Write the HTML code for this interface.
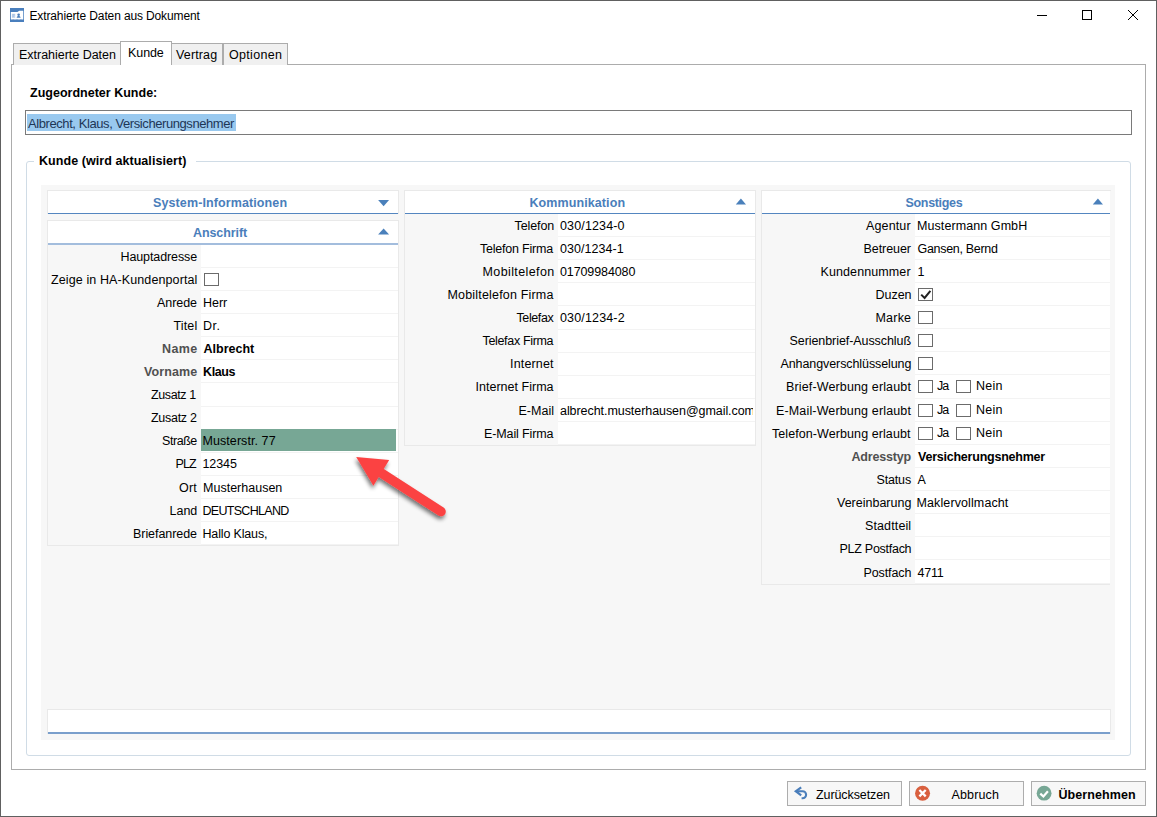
<!DOCTYPE html>
<html lang="de">
<head>
<meta charset="utf-8">
<title>Extrahierte Daten aus Dokument</title>
<style>
html,body{margin:0;padding:0;}
body{width:1157px;height:817px;overflow:hidden;background:#fff;position:relative;
  font-family:"Liberation Sans",sans-serif;font-size:12.5px;color:#000;}
#win{position:absolute;left:0;top:0;width:1155px;height:815px;border:1px solid #606060;background:#fff;}
.t{position:absolute;white-space:nowrap;line-height:14px;height:14px;}
.b{font-weight:bold;}
.tab{position:absolute;box-sizing:border-box;border:1px solid #acacac;border-bottom:none;background:#f0f0f0;top:43px;height:22px;}
.tab.sel{background:#fff;top:41px;height:24px;z-index:3;}
#panel{position:absolute;left:11px;top:64px;width:1133px;height:704px;border:1px solid #acacac;background:#fff;}
#inp{position:absolute;left:25px;top:110px;width:1105px;height:23px;border:1px solid #7a7a7a;background:#fff;}
#sel{position:absolute;left:27px;top:114px;width:209px;height:17px;background:#99c9ef;}
#grp{position:absolute;left:26px;top:161px;width:1103px;height:593px;border:1px solid #d0dce6;border-radius:3px;}
#grpbg{position:absolute;left:34px;top:155px;width:162px;height:14px;background:#fff;}
#gray{position:absolute;left:41px;top:185px;width:1074px;height:555px;background:#f7f7f7;}
.box{position:absolute;box-sizing:border-box;border:1px solid #e9e9e9;background:#f7f7f7;}
.hd{position:absolute;left:0;top:0;right:0;background:#fff;}
.hl{position:absolute;left:0;right:0;height:1px;background:#5486c0;}
.tri{position:absolute;width:0;height:0;border-left:5.5px solid transparent;border-right:5.5px solid transparent;}
.tri.dn{border-top:6px solid #4a7ebb;}
.tri.up{border-bottom:6px solid #4a7ebb;}
.val{position:absolute;background:#fff;border-bottom:1px solid #f3f3f3;box-sizing:border-box;}
.cb{position:absolute;box-sizing:border-box;width:15px;height:13px;border:1px solid #6b6b6b;background:#fff;}
.btn{position:absolute;top:781px;width:113px;height:23px;border:1px solid #adadad;background:#f7f7f7;}
.clip{position:absolute;overflow:hidden;}
</style>
</head>
<body>
<div id="win"></div>

<svg style="position:absolute;left:9.8px;top:7.6px" width="14.4" height="14.4" viewBox="0 0 14 14"><rect width="14" height="14" fill="#4a7fbd"/><path d="M0.8 3.8H7.2L9.1 2.6H12.9V11.2H0.8z" fill="#fff"/><path d="M2.6 11.2h0.9v-0.6h-0.9zM6.4 11.2h0.9v-0.6h-0.9zM10.2 11.2h0.9v-0.6h-0.9z" fill="#4a7fbd"/><rect x="1.8" y="5.6" width="3.3" height="4" fill="#c3d5ec"/><path d="M2.4 6.6h2.1M2.4 8h1.5" stroke="#9bb9df" stroke-width="0.7"/><circle cx="8.4" cy="6.6" r="1.25" fill="#4a7fbd"/><path d="M6.5 9.6C6.5 8.3 7.4 7.8 8.4 7.8S10.3 8.3 10.3 9.6z" fill="#4a7fbd"/></svg>
<svg style="position:absolute;left:1030px;top:5px" width="120" height="22" viewBox="0 0 120 22"><path d="M7 10.5h10" stroke="#000" stroke-width="1" fill="none"/><rect x="52.5" y="5.5" width="9" height="9" stroke="#000" stroke-width="1" fill="none"/><path d="M98 5l10 10M108 5l-10 10" stroke="#000" stroke-width="1" fill="none"/></svg>
<div id="panel"></div>
<div class="tab" style="left:13px;width:108px"></div>
<div class="tab" style="left:171px;width:52px"></div>
<div class="tab" style="left:223px;width:65px"></div>
<div class="tab sel" style="left:120px;width:52px"></div>
<div id="inp"></div><div id="sel"></div>
<div id="grp"></div><div id="grpbg"></div>
<div id="gray"></div>
<div class="box" style="left:47px;top:190px;width:352px;height:24px"><div class="hd" style="height:22px"></div><div class="hl" style="bottom:-1px;height:1px;background:#5486c0"></div></div>
<svg style="position:absolute;left:0;top:0" width="1157" height="300" viewBox="0 0 1157 300"><polygon points="378.1,200 389.1,200 383.6,206.2" fill="#4a80bb"/></svg>
<div class="box" style="left:47px;top:220px;width:352px;height:25px"><div class="hd" style="height:22px"></div><div class="hl" style="bottom:-1px;height:2px;background:#a3bddd"></div></div>
<svg style="position:absolute;left:0;top:0" width="1157" height="300" viewBox="0 0 1157 300"><polygon points="378.1,234.6 389.1,234.6 383.6,228.6" fill="#4a80bb"/></svg>
<div class="box" style="left:47px;top:245px;width:352px;height:301px;border-top:none"></div>
<div class="val" style="left:201px;top:245px;width:197px;height:23px"></div>
<div class="val" style="left:201px;top:268px;width:197px;height:23px"></div>
<div class="cb" style="left:204px;top:273px"></div>
<div class="val" style="left:201px;top:291px;width:197px;height:23px"></div>
<div class="val" style="left:201px;top:314px;width:197px;height:23px"></div>
<div class="val" style="left:201px;top:337px;width:197px;height:23px"></div>
<div class="val" style="left:201px;top:360px;width:197px;height:23px"></div>
<div class="val" style="left:201px;top:383px;width:197px;height:24px"></div>
<div class="val" style="left:201px;top:407px;width:197px;height:23px"></div>
<div class="val" style="left:201px;top:430px;width:197px;height:23px"></div>
<div style="position:absolute;left:201px;top:429px;width:195px;height:22px;background:#77a795"></div>
<div class="val" style="left:201px;top:453px;width:197px;height:23px"></div>
<div class="val" style="left:201px;top:476px;width:197px;height:23px"></div>
<div class="val" style="left:201px;top:499px;width:197px;height:23px"></div>
<div class="val" style="left:201px;top:522px;width:197px;height:23px"></div>
<div class="box" style="left:404px;top:190px;width:352px;height:24px"><div class="hd" style="height:22px"></div><div class="hl" style="bottom:-1px;height:1px;background:#5486c0"></div></div>
<svg style="position:absolute;left:0;top:0" width="1157" height="300" viewBox="0 0 1157 300"><polygon points="735.8,204.6 746.0,204.6 740.9,198.6" fill="#4a80bb"/></svg>
<div class="box" style="left:404px;top:214px;width:352px;height:232px;border-top:none"></div>
<div class="val" style="left:558px;top:214px;width:197px;height:23px"></div>
<div class="val" style="left:558px;top:237px;width:197px;height:23px"></div>
<div class="val" style="left:558px;top:260px;width:197px;height:23px"></div>
<div class="val" style="left:558px;top:283px;width:197px;height:23px"></div>
<div class="val" style="left:558px;top:306px;width:197px;height:24px"></div>
<div class="val" style="left:558px;top:330px;width:197px;height:23px"></div>
<div class="val" style="left:558px;top:353px;width:197px;height:23px"></div>
<div class="val" style="left:558px;top:376px;width:197px;height:23px"></div>
<div class="val" style="left:558px;top:399px;width:197px;height:23px"></div>
<div class="val" style="left:558px;top:422px;width:197px;height:23px"></div>
<div class="box" style="left:761px;top:190px;width:350px;height:24px"><div class="hd" style="height:22px"></div><div class="hl" style="bottom:-1px;height:1px;background:#5486c0"></div></div>
<svg style="position:absolute;left:0;top:0" width="1157" height="300" viewBox="0 0 1157 300"><polygon points="1092.8,204.6 1103.0,204.6 1097.8999999999999,198.6" fill="#4a80bb"/></svg>
<div class="box" style="left:761px;top:214px;width:350px;height:371px;border-top:none"></div>
<div class="val" style="left:915px;top:214px;width:195px;height:23px"></div>
<div class="val" style="left:915px;top:237px;width:195px;height:23px"></div>
<div class="val" style="left:915px;top:260px;width:195px;height:23px"></div>
<div class="val" style="left:915px;top:283px;width:195px;height:23px"></div>
<div class="cb" style="left:918px;top:288px"></div>
<svg style="position:absolute;left:918px;top:288px" width="15" height="13" viewBox="0 0 15 13"><path d="M3.2 6.6L6.6 10L12.4 2.8" stroke="#222" stroke-width="2" fill="none"/></svg>
<div class="val" style="left:915px;top:306px;width:195px;height:23px"></div>
<div class="cb" style="left:918px;top:311px"></div>
<div class="val" style="left:915px;top:329px;width:195px;height:23px"></div>
<div class="cb" style="left:918px;top:334px"></div>
<div class="val" style="left:915px;top:352px;width:195px;height:23px"></div>
<div class="cb" style="left:918px;top:357px"></div>
<div class="val" style="left:915px;top:375px;width:195px;height:24px"></div>
<div class="cb" style="left:918px;top:380px"></div>
<div class="cb" style="left:956px;top:380px"></div>
<div class="val" style="left:915px;top:399px;width:195px;height:23px"></div>
<div class="cb" style="left:918px;top:404px"></div>
<div class="cb" style="left:956px;top:404px"></div>
<div class="val" style="left:915px;top:422px;width:195px;height:23px"></div>
<div class="cb" style="left:918px;top:427px"></div>
<div class="cb" style="left:956px;top:427px"></div>
<div class="val" style="left:915px;top:445px;width:195px;height:23px"></div>
<div class="val" style="left:915px;top:468px;width:195px;height:23px"></div>
<div class="val" style="left:915px;top:491px;width:195px;height:23px"></div>
<div class="val" style="left:915px;top:514px;width:195px;height:23px"></div>
<div class="val" style="left:915px;top:537px;width:195px;height:23px"></div>
<div class="val" style="left:915px;top:560px;width:195px;height:24px"></div>
<div style="position:absolute;left:1110px;top:191px;width:1px;height:395px;background:#f7f7f7"></div>
<div class="box" style="left:47px;top:709px;width:1064px;height:25px"><div class="hd" style="height:22px"></div><div class="hl" style="bottom:-1px;height:2px;background:#7a9fcc"></div></div>
<div class="btn" style="left:787px"></div>
<div class="btn" style="left:909px"></div>
<div class="btn" style="left:1031px"></div>
<svg style="position:absolute;left:790px;top:783px" width="22" height="20" viewBox="790 783 22 20"><path d="M801.2 787.3L795.8 791.2L801.2 795.3" stroke="#4a7ebb" stroke-width="2.2" fill="none"/><path d="M796.5 791.2H802.6A3.5 3.5 0 0 1 802.6 798.2H801.6" stroke="#4a7ebb" stroke-width="2.1" fill="none"/></svg>
<svg style="position:absolute;left:912px;top:783px" width="22" height="20" viewBox="912 783 22 20"><circle cx="922.55" cy="793.2" r="7.5" fill="#d9603f"/><path d="M919.4 790.05l6.3 6.3M925.7 790.05l-6.3 6.3" stroke="#fff" stroke-width="2.3" fill="none"/></svg>
<svg style="position:absolute;left:1034px;top:783px" width="22" height="20" viewBox="1034 783 22 20"><circle cx="1044.1" cy="793.2" r="7.4" fill="#77a795"/><path d="M1040.3 793.6l3.1 2.9l4.5-5.2" stroke="#fff" stroke-width="2.2" fill="none"/></svg>
<div class="t" id="title" style="left:29.5px;top:9px;font-size:12px;letter-spacing:-0.13px;">Extrahierte Daten aus Dokument</div>
<div class="t" id="tab1" style="left:19px;top:48px;letter-spacing:-0.02px;">Extrahierte Daten</div>
<div class="t" id="tab2" style="left:128px;top:46px;letter-spacing:-0.08px;z-index:4;">Kunde</div>
<div class="t" id="tab3" style="left:176px;top:48px;letter-spacing:0.14px;">Vertrag</div>
<div class="t" id="tab4" style="left:229px;top:48px;letter-spacing:0.32px;">Optionen</div>
<div class="t b" id="zk" style="left:30px;top:86px;letter-spacing:0.01px;">Zugeordneter Kunde:</div>
<div class="t" id="seltxt" style="left:28px;top:117px;font-size:13px;letter-spacing:-0.42px;color:#1e3656;">Albrecht, Klaus, Versicherungsnehmer</div>
<div class="t b" id="grpt" style="left:39px;top:154px;letter-spacing:0.06px;">Kunde (wird aktualisiert)</div>
<div class="t b" id="h1" style="left:153px;top:196px;letter-spacing:0.11px;color:#4a7ebb;">System-Informationen</div>
<div class="t b" id="h2" style="left:193px;top:226px;letter-spacing:-0.09px;color:#4a7ebb;">Anschrift</div>
<div class="t" id="Ll0" style="left:120.5px;top:250px;letter-spacing:-0.11px;">Hauptadresse</div>
<div class="t" id="Ll1" style="left:51px;top:273px;letter-spacing:0.11px;">Zeige in HA-Kundenportal</div>
<div class="t" id="Ll2" style="left:157px;top:296px;letter-spacing:-0.06px;">Anrede</div>
<div class="t" id="Lv2" style="left:203px;top:296px;letter-spacing:-0.03px;">Herr</div>
<div class="t" id="Ll3" style="left:173.5px;top:319px;letter-spacing:0.15px;">Titel</div>
<div class="t" id="Lv3" style="left:203px;top:319px;letter-spacing:0.56px;">Dr.</div>
<div class="t b" id="Ll4" style="left:162px;top:342px;letter-spacing:0.36px;color:#505050;">Name</div>
<div class="t b" id="Lv4" style="left:203.5px;top:342px;letter-spacing:0.01px;">Albrecht</div>
<div class="t b" id="Ll5" style="left:144px;top:365px;letter-spacing:0.09px;color:#505050;">Vorname</div>
<div class="t b" id="Lv5" style="left:203px;top:365px;letter-spacing:-0.38px;">Klaus</div>
<div class="t" id="Ll6" style="left:151px;top:388px;letter-spacing:-0.38px;">Zusatz 1</div>
<div class="t" id="Ll7" style="left:151px;top:411px;letter-spacing:-0.28px;">Zusatz 2</div>
<div class="t" id="Ll8" style="left:162px;top:434px;letter-spacing:-0.44px;">Straße</div>
<div class="t" id="Lv8" style="left:202.5px;top:434px;letter-spacing:0.07px;">Musterstr. 77</div>
<div class="t" id="Ll9" style="left:175.5px;top:457px;letter-spacing:-0.86px;">PLZ</div>
<div class="t" id="Lv9" style="left:202.5px;top:457px;letter-spacing:-0.08px;">12345</div>
<div class="t" id="Ll10" style="left:179px;top:481px;letter-spacing:0.23px;">Ort</div>
<div class="t" id="Lv10" style="left:203px;top:481px;letter-spacing:0.01px;">Musterhausen</div>
<div class="t" id="Ll11" style="left:169.5px;top:504px;">Land</div>
<div class="t" id="Lv11" style="left:202.5px;top:504px;letter-spacing:-0.7px;">DEUTSCHLAND</div>
<div class="t" id="Ll12" style="left:133px;top:527px;letter-spacing:-0.06px;">Briefanrede</div>
<div class="t" id="Lv12" style="left:202.5px;top:527px;letter-spacing:-0.16px;">Hallo Klaus,</div>
<div class="t b" id="h3" style="left:529.5px;top:196px;letter-spacing:0.09px;color:#4a7ebb;">Kommunikation</div>
<div class="t" id="Ml0" style="left:514.5px;top:219px;letter-spacing:-0.09px;">Telefon</div>
<div class="t" id="Mv0" style="left:560px;top:219px;letter-spacing:0.14px;">030/1234-0</div>
<div class="t" id="Ml1" style="left:480px;top:242px;letter-spacing:-0.21px;">Telefon Firma</div>
<div class="t" id="Mv1" style="left:560px;top:242px;letter-spacing:0.04px;">030/1234-1</div>
<div class="t" id="Ml2" style="left:482.5px;top:265px;letter-spacing:0.4px;">Mobiltelefon</div>
<div class="t" id="Mv2" style="left:560px;top:265px;letter-spacing:-0.11px;">01709984080</div>
<div class="t" id="Ml3" style="left:447.5px;top:288px;letter-spacing:0.18px;">Mobiltelefon Firma</div>
<div class="t" id="Ml4" style="left:516.5px;top:311px;letter-spacing:-0.4px;">Telefax</div>
<div class="t" id="Mv4" style="left:560px;top:311px;letter-spacing:0.15px;">030/1234-2</div>
<div class="t" id="Ml5" style="left:482.5px;top:334px;letter-spacing:-0.33px;">Telefax Firma</div>
<div class="t" id="Ml6" style="left:510px;top:357px;letter-spacing:0.16px;">Internet</div>
<div class="t" id="Ml7" style="left:475.5px;top:380px;letter-spacing:0.02px;">Internet Firma</div>
<div class="t" id="Ml8" style="left:518.5px;top:404px;letter-spacing:0.02px;">E-Mail</div>
<div class="clip" style="left:560px;top:404px;width:193px;height:16px"><div class="t" id="Mv8" style="left:0;top:0;letter-spacing:-0.06px;">albrecht.musterhausen@gmail.com</div></div>
<div class="t" id="Ml9" style="left:484px;top:427px;letter-spacing:-0.12px;">E-Mail Firma</div>
<div class="t b" id="h4" style="left:905.5px;top:196px;letter-spacing:-0.32px;color:#4a7ebb;">Sonstiges</div>
<div class="t" id="Rl0" style="left:866px;top:219px;letter-spacing:0.13px;">Agentur</div>
<div class="t" id="Rv0" style="left:917px;top:219px;letter-spacing:0.08px;">Mustermann GmbH</div>
<div class="t" id="Rl1" style="left:863.5px;top:242px;letter-spacing:-0.07px;">Betreuer</div>
<div class="t" id="Rv1" style="left:917.5px;top:242px;letter-spacing:-0.31px;">Gansen, Bernd</div>
<div class="t" id="Rl2" style="left:820.5px;top:265px;letter-spacing:0.1px;">Kundennummer</div>
<div class="t" id="Rv2" style="left:917.5px;top:265px;">1</div>
<div class="t" id="Rl3" style="left:875.5px;top:288px;letter-spacing:-0.02px;">Duzen</div>
<div class="t" id="Rl4" style="left:875.5px;top:311px;letter-spacing:0.2px;">Marke</div>
<div class="t" id="Rl5" style="left:789.5px;top:334px;letter-spacing:-0.07px;">Serienbrief-Ausschluß</div>
<div class="t" id="Rl6" style="left:780.5px;top:357px;letter-spacing:-0.09px;">Anhangverschlüsselung</div>
<div class="t" id="Rl7" style="left:786px;top:380px;letter-spacing:0.14px;">Brief-Werbung erlaubt</div>
<div class="t" id="Rja7" style="left:937px;top:379px;letter-spacing:-0.9px;">Ja</div>
<div class="t" id="Rnein7" style="left:976px;top:379px;letter-spacing:0.27px;">Nein</div>
<div class="t" id="Rl8" style="left:776px;top:404px;letter-spacing:0.15px;">E-Mail-Werbung erlaubt</div>
<div class="t" id="Rja8" style="left:937px;top:403px;letter-spacing:-0.9px;">Ja</div>
<div class="t" id="Rnein8" style="left:976px;top:403px;letter-spacing:0.27px;">Nein</div>
<div class="t" id="Rl9" style="left:772px;top:427px;letter-spacing:0.08px;">Telefon-Werbung erlaubt</div>
<div class="t" id="Rja9" style="left:937px;top:426px;letter-spacing:-0.9px;">Ja</div>
<div class="t" id="Rnein9" style="left:976px;top:426px;letter-spacing:0.27px;">Nein</div>
<div class="t b" id="Rl10" style="left:851.5px;top:450px;letter-spacing:-0.19px;color:#505050;">Adresstyp</div>
<div class="t b" id="Rv10" style="left:918px;top:450px;letter-spacing:-0.23px;">Versicherungsnehmer</div>
<div class="t" id="Rl11" style="left:876.5px;top:473px;letter-spacing:-0.16px;">Status</div>
<div class="t" id="Rv11" style="left:917.5px;top:473px;">A</div>
<div class="t" id="Rl12" style="left:837px;top:496px;">Vereinbarung</div>
<div class="t" id="Rv12" style="left:916.5px;top:496px;letter-spacing:0.11px;">Maklervollmacht</div>
<div class="t" id="Rl13" style="left:865px;top:519px;letter-spacing:0.12px;">Stadtteil</div>
<div class="t" id="Rl14" style="left:839.5px;top:542px;letter-spacing:-0.27px;">PLZ Postfach</div>
<div class="t" id="Rl15" style="left:863.5px;top:566px;letter-spacing:-0.11px;">Postfach</div>
<div class="t" id="Rv15" style="left:917.5px;top:566px;letter-spacing:-0.22px;">4711</div>
<div class="t" id="b1" style="left:816px;top:788px;letter-spacing:-0.09px;">Zurücksetzen</div>
<div class="t" id="b2" style="left:951.5px;top:788px;letter-spacing:0.13px;">Abbruch</div>
<div class="t b" id="b3" style="left:1058.5px;top:788px;letter-spacing:0.07px;">Übernehmen</div>
<svg style="position:absolute;left:330px;top:430px;overflow:visible" width="140" height="110" viewBox="330 430 140 110">
<defs><filter id="sh" x="-30%" y="-30%" width="160%" height="160%"><feGaussianBlur in="SourceAlpha" stdDeviation="2.2"/><feOffset dx="-1.5" dy="3"/><feComponentTransfer><feFuncA type="linear" slope="0.55"/></feComponentTransfer><feMerge><feMergeNode/><feMergeNode in="SourceGraphic"/></feMerge></filter></defs>
<g filter="url(#sh)" fill="#fb4343" stroke="none">
<path d="M356.2 457 L389.2 460.1 L373.4 485.7 Z"/>
<path d="M381.3 473 L441 511.6" stroke="#fb4343" stroke-width="9.5" stroke-linecap="round" fill="none"/>
</g></svg>
</body>
</html>
